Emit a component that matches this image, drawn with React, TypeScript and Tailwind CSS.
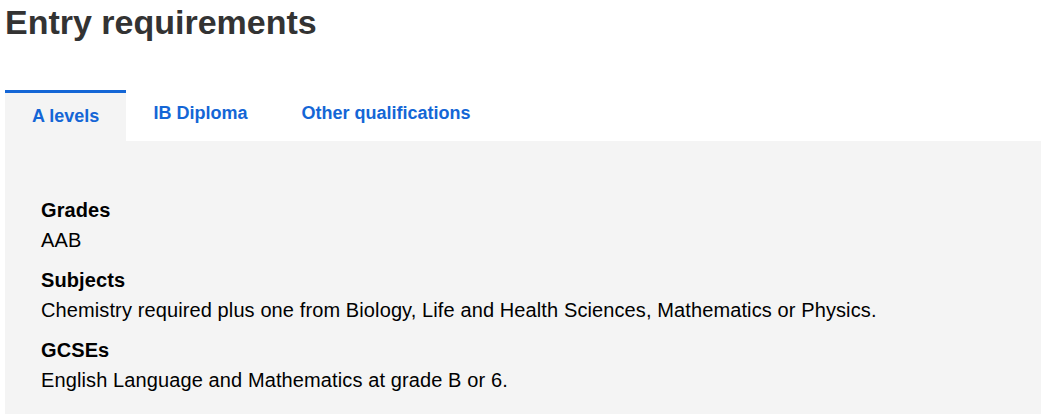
import React from "react";

const tabs = ["A levels", "IB Diploma", "Other qualifications"];

const items = [
  { term: "Grades", desc: "AAB" },
  {
    term: "Subjects",
    desc: "Chemistry required plus one from Biology, Life and Health Sciences, Mathematics or Physics.",
  },
  { term: "GCSEs", desc: "English Language and Mathematics at grade B or 6." },
];

export default function App() {
  return (
    <div
      className="bg-white pl-[5px] overflow-hidden"
      style={{ fontFamily: '"Liberation Sans", Arial, sans-serif' }}
    >
      <h1 className="text-[34px] leading-[44px] font-bold text-[#333333]">
        Entry requirements
      </h1>
      <div className="mt-[46px] flex items-end">
        {tabs.map((t, i) =>
          i === 0 ? (
            <div
              key={t}
              className="border-t-[3px] border-[#1466d6] bg-[#f4f4f4] px-[27px] pt-[11px] pb-[13px] text-[18px] leading-[24px] font-bold text-[#1466d6]"
            >
              {t}
            </div>
          ) : (
            <div
              key={t}
              className="border-t-[3px] border-transparent px-[27px] pt-[8px] pb-[16px] text-[18px] leading-[24px] font-bold text-[#1466d6]"
            >
              {t}
            </div>
          )
        )}
      </div>
      <div className="bg-[#f4f4f4] pl-[36px] pt-[54px] pb-[19px]">
        <dl className="text-[20px] leading-[30px] tracking-[0.11px] text-black">
          {items.map((it, i) => (
            <div key={it.term} className={i === 0 ? "" : "mt-[10px]"}>
              <dt className="font-bold">{it.term}</dt>
              <dd>{it.desc}</dd>
            </div>
          ))}
        </dl>
      </div>
    </div>
  );
}
